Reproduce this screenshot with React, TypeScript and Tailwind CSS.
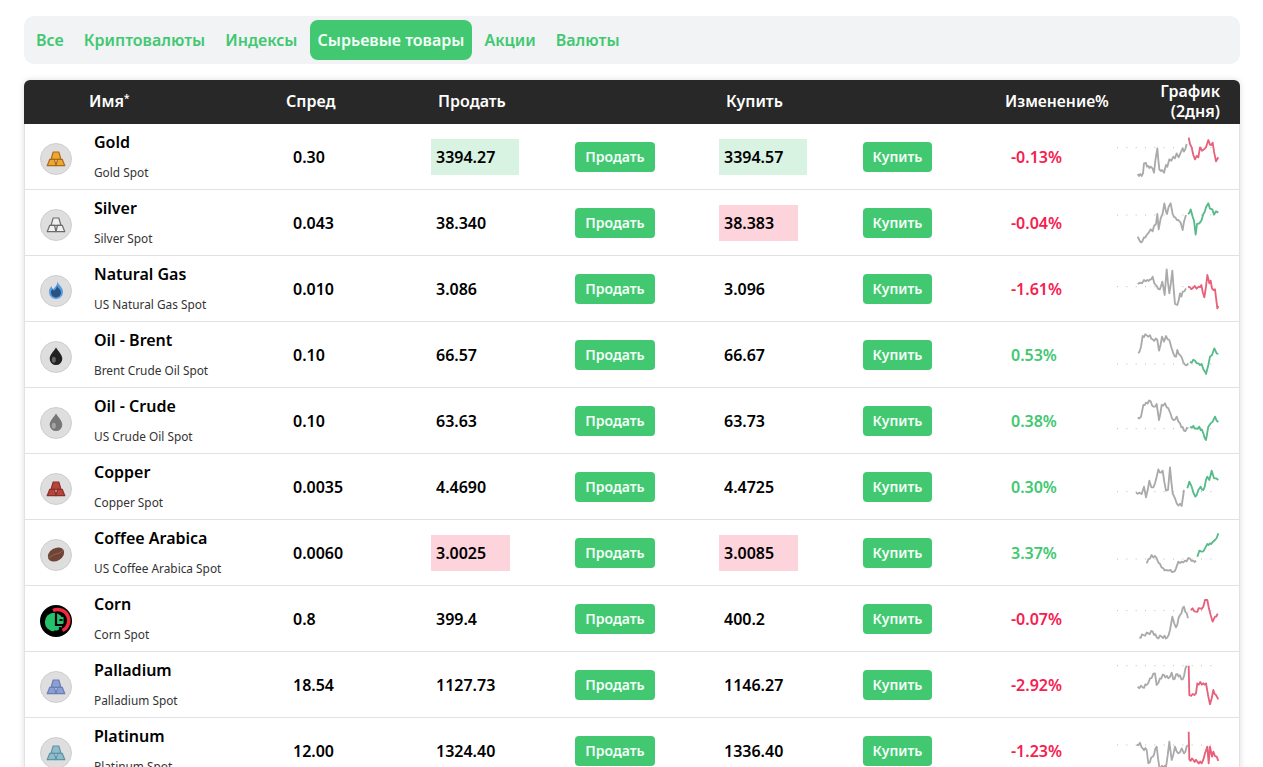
import type { ReactNode } from 'react';

const tabs = ['Все', 'Криптовалюты', 'Индексы', 'Сырьевые товары', 'Акции', 'Валюты'];

type Tint = 'up' | 'down' | null;

interface Row {
  name: string;
  sub: string;
  spread: string;
  sell: string;
  sellTint: Tint;
  buy: string;
  buyTint: Tint;
  change: string;
  icon: ReactNode;
  top: number;
  dots: number;
  past: string;
  now: string;
  trend: 'up' | 'down';
}

const Bars = ({ fill, stroke }: { fill: string; stroke: string }) => (
  <svg viewBox="0 0 32 32" className="h-8 w-8 shrink-0">
    <g fill={fill} stroke={stroke} strokeWidth="1.200" strokeLinejoin="round">
      <path d="M13.200 9h5.600l2.200 7.300H11z" />
      <path d="M9.800 16.300h4.700l1.500 6.400H7.200z" />
      <path d="M17.500 16.300h4.700l2.600 6.400H16z" />
    </g>
  </svg>
);

const Drop = ({ fill, shine }: { fill: string; shine: string }) => (
  <svg viewBox="0 0 32 32" className="h-8 w-8 shrink-0">
    <path d="M16 6.500c2.500 4 6.300 7.500 6.300 11.200a6.300 6.300 0 0 1-12.600 0C9.700 14 13.500 10.500 16 6.500z" fill={fill} />
    <ellipse cx="13.800" cy="18.800" rx="2" ry="3" fill={shine} />
  </svg>
);

const Flame = () => (
  <svg viewBox="0 0 32 32" className="h-8 w-8 shrink-0">
    <path d="M17.500 6.500c1 3.500 5.500 5.500 5.500 10.500a7 7 0 0 1-14 0c0-2.500 1-4.500 2.500-6 .2 1.500.8 2.500 1.800 3 2-2 4.200-4.500 4.200-7.500z" fill="#5b9be0" />
    <path d="M17 10.500c.5 2.500 4 3.500 4 7a5 5 0 0 1-10 0c0-1.200.5-2.400 1.400-3.400.5 1 1 1.500 1.800 1.500 1.500-1.200 2.800-3 2.800-5.100z" fill="#265382" />
  </svg>
);

const Bean = () => (
  <svg viewBox="0 0 32 32" className="h-8 w-8 shrink-0">
    <ellipse cx="16" cy="15.500" rx="8.800" ry="6.300" fill="#6f4436" transform="rotate(-30 16 15.500)" />
    <path d="M8.800 18.500c3-.8 4-3 7-3.500 3-.5 5-1.500 7.200-3.500" fill="none" stroke="#946a5a" strokeWidth="1" />
  </svg>
);

const CornLogo = () => (
  <svg viewBox="0 0 32 32" className="h-8 w-8 shrink-0">
    <circle cx="16" cy="16" r="16" fill="#000" />
    <path d="M13 5.500a11 11 0 0 1 9.500 20" fill="none" stroke="#ef2b3c" strokeWidth="3.500" />
    <circle cx="14" cy="17" r="9.200" fill="#23c26b" />
    <rect x="17.500" y="12" width="6" height="6.500" fill="#23c26b" />
    <path d="M16 7v13h8" fill="none" stroke="#000" strokeWidth="2.200" />
    <path d="M19.500 15h3" fill="none" stroke="#000" strokeWidth="2" />
    <path d="M14 26.500h6V22" fill="none" stroke="#000" strokeWidth="2.200" />
  </svg>
);

const rows: Row[] = [
  {
    name: 'Gold', sub: 'Gold Spot', spread: '0.30', sell: '3394.27', sellTint: 'up', buy: '3394.57', buyTint: 'up', change: '-0.13%', trend: 'down',
    icon: <Bars fill="#f2a632" stroke="#a86c18" />, top: 162, dots: 233,
    past: '533,312 545,318 549,310 552,280 558,279 561,290 565,288 568,294 572,290 578,296 582,308 586,272 592,235 595,270 598,298 606,300 612,308 618,285 622,290 628,268 634,272 640,260 645,265 650,250 656,262 662,248 668,235 672,245 680,222',
    now: '686,203 690,222 695,232 700,255 705,268 710,258 715,262 720,232 726,242 732,238 738,232 745,210 750,224 758,218 762,245 768,274 775,262',
  },
  {
    name: 'Silver', sub: 'Silver Spot', spread: '0.043', sell: '38.340', sellTint: null, buy: '38.383', buyTint: 'down', change: '-0.04%', trend: 'up',
    icon: <Bars fill="#f1f1f1" stroke="#6b6b6b" />, top: 360, dots: 435,
    past: '533,500 538,510 546,516 552,502 560,495 566,488 572,478 578,484 582,468 588,462 592,432 596,478 602,445 608,430 613,400 618,425 621,432 626,410 632,400 638,432 646,442 655,450 662,458 668,480 672,455 678,435',
    now: '684,432 692,418 698,440 702,452 707,494 711,462 718,460 724,452 730,432 738,412 745,400 750,416 757,418 762,434 768,424 775,428',
  },
  {
    name: 'Natural Gas', sub: 'US Natural Gas Spot', spread: '0.010', sell: '3.086', sellTint: null, buy: '3.096', buyTint: null, change: '-1.61%', trend: 'down',
    icon: <Flame />, top: -12, dots: 80,
    past: '533,72 540,68 546,70 552,60 562,60 570,58 578,50 583,70 590,78 600,88 607,65 614,105 620,28 628,100 637,32 645,132 652,135 660,100 664,110 668,95 678,85',
    now: '684,80 690,82 698,85 704,78 710,86 716,80 724,75 733,112 738,80 742,45 748,70 752,62 756,85 765,88 772,145 775,138',
  },
  {
    name: 'Oil - Brent', sub: 'Brent Crude Oil Spot', spread: '0.10', sell: '66.57', sellTint: null, buy: '66.67', buyTint: null, change: '0.53%', trend: 'up',
    icon: <Drop fill="#222" shine="#666" />, top: 186, dots: 312,
    past: '535,280 543,260 548,228 560,226 570,226 578,238 592,240 597,272 606,230 612,245 618,228 628,240 634,262 640,280 648,290 652,270 660,285 665,292 675,314 685,310',
    now: '690,305 705,302 715,310 725,312 735,335 738,342 745,315 750,290 756,285 763,265 770,280 775,282',
  },
  {
    name: 'Oil - Crude', sub: 'US Crude Oil Spot', spread: '0.10', sell: '63.63', sellTint: null, buy: '63.73', buyTint: null, change: '0.38%', trend: 'up',
    icon: <Drop fill="#777" shine="#a5a5a5" />, top: 384, dots: 506,
    past: '533,473 543,470 550,435 558,428 572,424 580,440 590,432 597,480 605,435 615,430 625,445 632,462 640,480 650,470 660,490 672,512 685,505',
    now: '690,500 700,498 708,505 718,500 730,520 738,540 745,500 752,490 758,485 765,470 775,486',
  },
  {
    name: 'Copper', sub: 'Copper Spot', spread: '0.0035', sell: '4.4690', sellTint: null, buy: '4.4725', buyTint: null, change: '0.30%', trend: 'up',
    icon: <Bars fill="#b8443c" stroke="#8a302a" />, top: 582, dots: 695,
    past: '528,697 538,698 545,702 552,680 558,712 568,662 574,682 580,682 590,650 595,628 603,638 608,632 618,692 624,690 630,622 638,700 645,715 650,730 665,738 672,690',
    now: '682,685 688,665 695,680 706,710 715,690 722,680 730,690 742,650 748,660 755,632 762,655 768,655 775,660',
  },
  {
    name: 'Coffee Arabica', sub: 'US Coffee Arabica Spot', spread: '0.0060', sell: '3.0025', sellTint: 'down', buy: '3.0085', buyTint: 'down', change: '3.37%', trend: 'up',
    icon: <Bean />, top: 0, dots: 117,
    past: '560,130 565,118 575,105 590,115 600,132 610,145 618,150 625,152 632,150 640,155 648,145 655,125 665,125 675,122 690,116 700,122 708,122',
    now: '712,110 718,92 725,95 735,85 742,72 750,70 758,66 765,60 775,40',
  },
  {
    name: 'Corn', sub: 'Corn Spot', spread: '0.8', sell: '399.4', sellTint: null, buy: '400.2', buyTint: null, change: '-0.07%', trend: 'down',
    icon: <CornLogo />, top: 198, dots: 272,
    past: '538,352 550,345 565,340 578,335 590,352 605,350 622,352 630,330 637,290 648,322 660,285 672,260 684,295',
    now: '692,270 698,265 708,275 720,265 730,260 735,240 742,240 752,285 758,305 765,290 773,281',
  },
  {
    name: 'Palladium', sub: 'Palladium Spot', spread: '18.54', sell: '1127.73', sellTint: null, buy: '1146.27', buyTint: null, change: '-2.92%', trend: 'down',
    icon: <Bars fill="#8b9fd4" stroke="#6a7eb5" />, top: 396, dots: 437,
    past: '533,500 548,502 560,495 570,475 585,460 590,495 600,475 612,465 625,475 635,458 640,478 652,462 668,478 680,437',
    now: '686,437 688,525 698,522 708,520 712,490 730,490 738,490 745,530 750,553 760,510 768,525 775,538',
  },
  {
    name: 'Platinum', sub: 'Platinum Spot', spread: '12.00', sell: '1324.40', sellTint: null, buy: '1336.40', buyTint: null, change: '-1.23%', trend: 'down',
    icon: <Bars fill="#8fbccb" stroke="#5f93a6" />, top: 594, dots: 675,
    past: '530,675 540,668 548,685 560,690 565,730 578,710 590,680 598,741 618,741 628,665 635,720 645,680 655,700 665,685 672,700 684,675',
    now: '686,635 688,718 700,720 712,725 725,730 735,700 742,680 746,730 750,680 756,710 760,695 775,723',
  },
];

// breaks long segments up so the line has the same tick-by-tick noise as a real price chart
function jag(points: string) {
  const pts = points.split(' ').map((p) => p.split(',').map(Number));
  const out: string[] = [];
  pts.forEach(([x, y], i) => {
    out.push(`${x},${y}`);
    const next = pts[i + 1];
    if (!next) return;
    const steps = Math.floor((next[0] - x) / 4);
    for (let s = 1; s < steps; s++) {
      const nx = x + ((next[0] - x) * s) / steps;
      const ny = y + ((next[1] - y) * s) / steps + (s % 2 ? 4 : -4);
      out.push(`${nx.toFixed(1)},${ny.toFixed(1)}`);
    }
  });
  return out.join(' ');
}

function Spark({ row }: { row: Row }) {
  return (
    <svg width="102" height="66" viewBox={`471 ${row.top} 306 198`} className="block">
      <line
        x1="471"
        x2="777"
        y1={row.dots}
        y2={row.dots}
        stroke="#bbb"
        strokeWidth="3"
        strokeDasharray="3 25"
      />
      <polyline points={jag(row.past)} fill="none" stroke="#aaa" strokeWidth="5.500" strokeLinejoin="round" />
      <polyline
        points={jag(row.now)}
        fill="none"
        stroke={row.trend === 'up' ? '#55bb88' : '#e8607a'}
        strokeWidth="5.500"
        strokeLinejoin="round"
      />
    </svg>
  );
}

function Price({ value, tint }: { value: string; tint: Tint }) {
  const bg = tint === 'up' ? 'bg-[#d9f3e2]' : tint === 'down' ? 'bg-[#fdd3dc]' : '';
  return <span className={`inline-block py-[7px] pl-[5px] pr-[24px] leading-[22px] ${bg}`}>{value}</span>;
}

export default function App() {
  return (
    <div
      className="h-screen overflow-hidden bg-white pl-[24px] pr-[23px] pt-[16px] text-black"
      style={{ fontFamily: '"Noto Sans", "Open Sans", sans-serif' }}
    >
      <div className="flex h-[48px] items-center rounded-[10px] bg-[#f1f3f5] px-[4px] text-[16.05px] font-semibold text-[#41c871]">
        {tabs.map((tab) => (
          <span
            key={tab}
            className={`mr-[4px] flex h-[40px] items-center rounded-[8px] px-[8px] ${
              tab === 'Сырьевые товары' ? 'bg-[#41c871] text-[#f4fff8]' : ''
            }`}
          >
            {tab}
          </span>
        ))}
      </div>

      <div className="mt-[16px] rounded-t-[6px] shadow-[0_0_6px_rgba(0,0,0,0.14)]">
        <div className="grid h-[44px] grid-cols-[65px_197px_152px_288px_279px_1fr] items-center rounded-t-[6px] bg-[#282828] pb-[2px] text-[16px] font-semibold leading-[20px] text-white">
          <span />
          <span>
            Имя<sup className="text-[10px]">*</sup>
          </span>
          <span>Спред</span>
          <span>Продать</span>
          <span>Купить</span>
          <span className="flex items-center justify-between pr-[20px]">
            <span className="text-[15.7px]">Изменение%</span>
            <span className="w-[66px] text-right">График (2дня)</span>
          </span>
        </div>

        {rows.map((r) => (
          <div
            key={r.name}
            className="grid h-[66px] grid-cols-[64px_199px_143px_144px_144px_144px_143px_111px_1fr] items-center border-x border-b border-[#e2e2e2] text-[16px] font-semibold"
          >
            <div className="flex justify-center pr-[2px] pt-[3px]">
              {r.name === 'Corn' ? (
                <div className="h-8 w-8">{r.icon}</div>
              ) : (
                <div className="flex h-8 w-8 items-center justify-center rounded-full border border-[#cfcfcf] bg-[#dedede]">
                  {r.icon}
                </div>
              )}
            </div>
            <div className="flex h-full flex-col pl-[5px]">
              <span className="mt-[7px] leading-[22px]">{r.name}</span>
              <span className="mt-[11px] text-[11.85px] font-normal leading-[16px] text-[#333]">{r.sub}</span>
            </div>
            <span className="pl-[5px]">{r.spread}</span>
            <span>
              <Price value={r.sell} tint={r.sellTint} />
            </span>
            <span>
              <button className="h-[30px] w-[80px] rounded-[4px] bg-[#41c871] pb-[1px] text-[14px] font-semibold text-[#f4fff8]">
                Продать
              </button>
            </span>
            <span>
              <Price value={r.buy} tint={r.buyTint} />
            </span>
            <span>
              <button className="h-[30px] w-[69px] rounded-[4px] bg-[#41c871] pb-[1px] text-[14px] font-semibold text-[#f4fff8]">
                Купить
              </button>
            </span>
            <span className={`pl-[5px] ${r.change.startsWith('-') ? 'text-[#f5204f]' : 'text-[#41c871]'}`}>
              {r.change}
            </span>
            <Spark row={r} />
          </div>
        ))}
      </div>
    </div>
  );
}
